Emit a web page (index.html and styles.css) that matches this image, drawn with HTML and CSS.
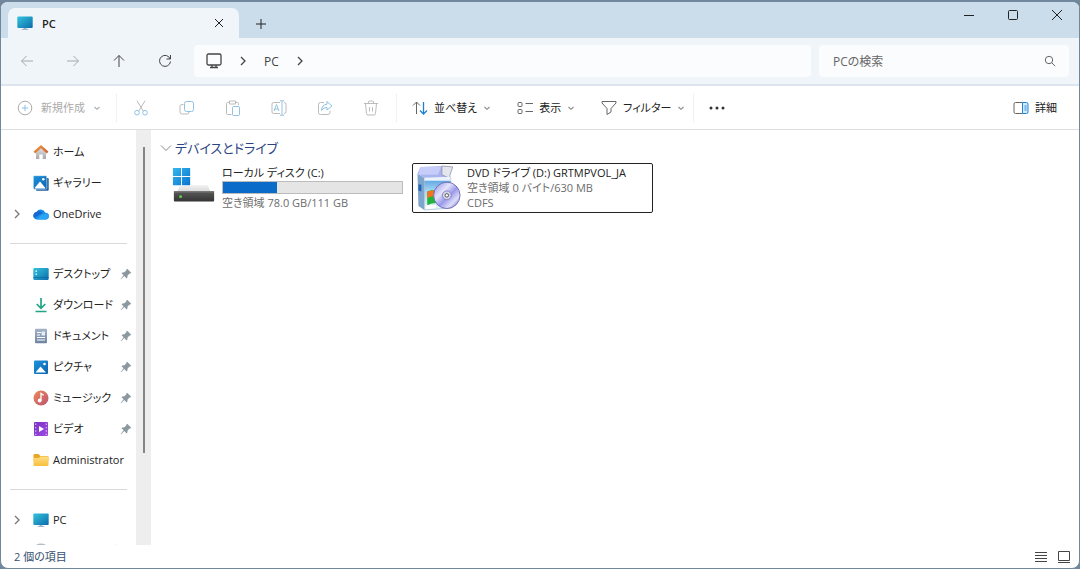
FILE: index.html
```html
<!DOCTYPE html>
<html lang="ja">
<head>
<meta charset="utf-8">
<meta name="viewport" content="width=device-width, initial-scale=1">
<title>PC</title>
<link rel="stylesheet" href="styles.css">
</head>
<body>
<svg class="defs" aria-hidden="true">
  <defs>
    <linearGradient id="g-screen" x1="0" y1="0" x2="1" y2="1"><stop offset="0" stop-color="#35c4dc"/><stop offset="1" stop-color="#0b6cad"/></linearGradient>
    <linearGradient id="g-roof" x1="0" y1="0" x2="1" y2="1"><stop offset="0" stop-color="#f0a040"/><stop offset="1" stop-color="#cf5a35"/></linearGradient>
    <linearGradient id="g-house" x1="0" y1="0" x2="0" y2="1"><stop offset="0" stop-color="#e4e4e4"/><stop offset="1" stop-color="#a8a8a8"/></linearGradient>
    <linearGradient id="g-pic" x1="0" y1="0" x2="1" y2="1"><stop offset="0" stop-color="#1d93dc"/><stop offset="1" stop-color="#0a63b0"/></linearGradient>
    <linearGradient id="g-doc" x1="0" y1="0" x2="0" y2="1"><stop offset="0" stop-color="#a3b4c8"/><stop offset="1" stop-color="#6d83a0"/></linearGradient>
    <linearGradient id="g-music" x1="0" y1="0" x2="1" y2="1"><stop offset="0" stop-color="#ee8b5a"/><stop offset="1" stop-color="#b9546e"/></linearGradient>
    <linearGradient id="g-video" x1="0" y1="0" x2="1" y2="1"><stop offset="0" stop-color="#7a32c4"/><stop offset="1" stop-color="#a04be0"/></linearGradient>
    <linearGradient id="g-folder" x1="0" y1="0" x2="0" y2="1"><stop offset="0" stop-color="#ffdf82"/><stop offset="1" stop-color="#f7be3c"/></linearGradient>
    <linearGradient id="g-win" x1="0" y1="0" x2="1" y2="1"><stop offset="0" stop-color="#35b8ee"/><stop offset="1" stop-color="#0a73d0"/></linearGradient>
    <linearGradient id="g-drive" x1="0" y1="0" x2="0" y2="1"><stop offset="0" stop-color="#5a5a5a"/><stop offset="1" stop-color="#343434"/></linearGradient>
    <linearGradient id="g-lid" x1="0" y1="0" x2="0" y2="1"><stop offset="0" stop-color="#f0f0f0"/><stop offset="1" stop-color="#cfcfcf"/></linearGradient>
    <linearGradient id="g-box" x1="0" y1="0" x2="0" y2="1"><stop offset="0" stop-color="#4f9be0"/><stop offset=".4" stop-color="#a6d6f2"/><stop offset="1" stop-color="#eef7fb"/></linearGradient>
    <linearGradient id="g-disc" x1="0" y1="0" x2="1" y2="1"><stop offset="0" stop-color="#8a88e2"/><stop offset=".35" stop-color="#e4e4fc"/><stop offset=".55" stop-color="#9a99ea"/><stop offset=".75" stop-color="#ddddfa"/><stop offset="1" stop-color="#5a58c0"/></linearGradient>
    <symbol id="i-pc" viewBox="0 0 16 16"><path d="M6.500 12h3v2.500h-3z" fill="#9cb8c8"/><path d="M4.800 14h6.400v1H4.800z" fill="#a9bac4"/><rect x=".3" y="1.500" width="15.400" height="11.500" rx="1" fill="url(#g-screen)"/></symbol>
    <symbol id="i-pin" viewBox="0 0 12 12"><path d="M7.200.8 11.200 4.800 10 5.800 9.500 5.600 7.600 7.600 7.400 9.600 6.600 10.400 4.300 8 1 11.300.6 11l3-3.700L1.500 5.200l.9-.8 2-.1 2-2L6.200 1.800z" fill="#8c989f"/></symbol>
    <symbol id="i-down" viewBox="0 0 8 8"><path d="m1.500 3 2.500 2.300L6.500 3" fill="none" stroke="currentColor" stroke-width="1.100"/></symbol>
    <symbol id="i-right" viewBox="0 0 8 10"><path d="m2 1 4 4-4 4" fill="none" stroke="currentColor" stroke-width="1.300"/></symbol>
  </defs>
</svg>
<div class="window">
  <header class="titlebar">
    <div class="tab">
      <svg class="icon"><use href="#i-pc"/></svg>
      <span class="tab-title">PC</span>
      <button class="plain" aria-label="タブを閉じる"><svg class="line" width="10" height="10" viewBox="0 0 10 10"><path d="m1 1 8 8M9 1 1 9"/></svg></button>
    </div>
    <button class="plain new-tab" aria-label="新しいタブ"><svg class="line" width="10" height="10" viewBox="0 0 10 10"><path d="M5 0v10M0 5h10"/></svg></button>
    <div class="caption">
      <button class="plain" aria-label="最小化"><svg class="line" width="12" height="12" viewBox="0 0 12 12"><path d="M1 6.500h10"/></svg></button>
      <button class="plain" aria-label="最大化"><svg class="line" width="12" height="12" viewBox="0 0 12 12"><rect x="1.500" y="1.500" width="9" height="9" rx="1"/></svg></button>
      <button class="plain" aria-label="閉じる"><svg class="line" width="12" height="12" viewBox="0 0 12 12"><path d="m1 1 10 10M11 1 1 11"/></svg></button>
    </div>
  </header>

  <nav class="navbar" aria-label="移動">
    <div class="history">
      <button class="plain" disabled aria-label="戻る"><svg class="line" width="14" height="14" viewBox="0 0 14 14"><path d="M13 7H1.500M6.500 2l-5 5 5 5"/></svg></button>
      <button class="plain" disabled aria-label="進む"><svg class="line" width="14" height="14" viewBox="0 0 14 14"><path d="M1 7h11.500M7.500 2l5 5-5 5"/></svg></button>
      <button class="plain" aria-label="上へ"><svg class="line" width="14" height="14" viewBox="0 0 14 14"><path d="M7 13V1.500M2 6.500l5-5 5 5"/></svg></button>
      <button class="plain" aria-label="最新の情報に更新"><svg class="line" width="14" height="14" viewBox="0 0 14 14"><path d="M12.200 5A5.500 5.500 0 1 0 12.500 7.500M12.500 1v4h-4"/></svg></button>
    </div>
    <div class="address">
      <svg class="line monitor" width="16" height="16" viewBox="0 0 16 16"><rect x="1" y="1" width="14" height="11" rx="1.500"/><path d="M6 12v2.500M10 12v2.500M4 14.500h8"/></svg>
      <svg class="crumb-arrow"><use href="#i-right"/></svg>
      <button class="plain crumb">PC</button>
      <svg class="crumb-arrow"><use href="#i-right"/></svg>
    </div>
    <div class="search">
      <input type="search" aria-label="PCの検索" placeholder="PCの検索">
      <svg class="line" width="12" height="12" viewBox="0 0 12 12"><circle cx="5" cy="5" r="3.700"/><path d="m7.700 7.700 3.500 3.500"/></svg>
    </div>
  </nav>

  <div class="toolbar" role="toolbar" aria-label="コマンド">
    <button class="tool new" disabled><svg class="line" width="16" height="16" viewBox="0 0 16 16"><circle cx="8" cy="8" r="6.800"/><path stroke="#8ec3e6" d="M8 4.800v6.400M4.800 8h6.400"/></svg><span>新規作成</span><svg class="chev"><use href="#i-down"/></svg></button>
    <div class="edit-tools">
      <button class="plain" disabled aria-label="切り取り"><svg class="line" width="16" height="16" viewBox="0 0 16 16"><path d="m4 .8 6.300 10.300M12 .8 5.700 11.100"/><g stroke="#8ec3e6"><circle cx="4" cy="12.700" r="2.300"/><circle cx="12" cy="12.700" r="2.300"/></g></svg></button>
      <button class="plain" disabled aria-label="コピー"><svg class="line" width="16" height="16" viewBox="0 0 16 16"><path d="M4.500 4.500H3a2 2 0 0 0-2 2V12a2 2 0 0 0 2 2h5a2 2 0 0 0 2-2"/><rect x="5.500" y="1.500" width="9" height="10" rx="2" stroke="#8ec3e6"/></svg></button>
      <button class="plain" disabled aria-label="貼り付け"><svg class="line" width="16" height="16" viewBox="0 0 16 16"><path d="M6.500 14.500h-4a1 1 0 0 1-1-1v-10a1 1 0 0 1 1-1h2m6 0h2a1 1 0 0 1 1 1v1.500M4.500 1h6v3h-6z"/><rect x="7.500" y="6.500" width="7" height="9" rx="1" stroke="#8ec3e6"/></svg></button>
      <button class="plain" disabled aria-label="名前の変更"><svg class="line" width="16" height="16" viewBox="0 0 16 16"><path d="M9 2.500H2.500a1.500 1.500 0 0 0-1.500 1.500v8a1.500 1.500 0 0 0 1.500 1.500H9M13 2.500a2 2 0 0 1 2 2v7a2 2 0 0 1-2 2"/><path stroke="#8ec3e6" d="M9 .8h4M9 15.200h4M11 .8v14.400M3 11l2.500-6.500L8 11M4 9h3"/></svg></button>
      <button class="plain" disabled aria-label="共有"><svg class="line" width="16" height="16" viewBox="0 0 16 16"><path d="M7 2.500H3.500a2 2 0 0 0-2 2v8a2 2 0 0 0 2 2H11a2 2 0 0 0 2-2V11"/><path stroke="#8ec3e6" d="M10 1.500 15 6l-5 4V7.500Q6.500 7.200 4.500 10.500 4.800 4.700 10 4.200z"/></svg></button>
      <button class="plain" disabled aria-label="削除"><svg class="line" width="16" height="16" viewBox="0 0 16 16"><path d="M1 3.500h14M5.500 3.500V2a1 1 0 0 1 1-1h3a1 1 0 0 1 1 1v1.500M2.500 3.500l1 10a1.500 1.500 0 0 0 1.500 1.500h6a1.500 1.500 0 0 0 1.500-1.500l1-10M6.500 7v4.500M9.500 7v4.500"/></svg></button>
    </div>
    <div class="view-tools">
      <button class="tool"><svg class="line" width="16" height="16" viewBox="0 0 16 16"><path d="M4.500 14V2M1 5.500 4.500 2 8 5.500"/><path stroke="#1f7fd0" stroke-width="1.300" d="M11.500 2v12M8 10.500l3.500 3.500 3.500-3.500"/></svg><span>並べ替え</span><svg class="chev"><use href="#i-down"/></svg></button>
      <button class="tool"><svg class="line" width="16" height="16" viewBox="0 0 16 16"><rect x="1" y="2.500" width="4" height="4" rx="1"/><rect x="1" y="9.500" width="4" height="4" rx="1"/><path d="M8.500 3.500H16M8.500 11.500H16"/></svg><span>表示</span><svg class="chev"><use href="#i-down"/></svg></button>
      <button class="tool"><svg class="line" width="16" height="16" viewBox="0 0 16 16"><path d="M1 1.500h14v1.500L10 8.500V12l-4 2.500v-6L1 3z"/></svg><span>フィルター</span><svg class="chev"><use href="#i-down"/></svg></button>
    </div>
    <button class="plain more" aria-label="もっと見る"><svg width="18" height="4" viewBox="0 0 18 4" fill="#333"><circle cx="3" cy="2" r="1.500"/><circle cx="9" cy="2" r="1.500"/><circle cx="15" cy="2" r="1.500"/></svg></button>
    <button class="tool details"><svg class="line" width="16" height="16" viewBox="0 0 16 16"><path d="M9.500 13.500H2.500a1.500 1.500 0 0 1-1.500-1.500V4a1.500 1.500 0 0 1 1.500-1.500h7"/><path stroke="#1f86d6" fill="#d5eafa" d="M9.500 2.500h4A1.500 1.500 0 0 1 15 4v8a1.500 1.500 0 0 1-1.500 1.500h-4zM11.500 6h2M11.500 8h2M11.500 10h2"/></svg><span>詳細</span></button>
  </div>

  <div class="body">
    <aside class="sidebar">
      <ul class="tree">
        <li><a class="item" href="#"><span></span><svg class="icon" viewBox="0 0 16 16"><path d="M3 7.500 8 3l5 4.500V15H9.700v-4.500H6.300V15H3z" fill="url(#g-house)"/><path d="M8 1 .6 7.600l1.500 1.800L8 4.200l5.900 5.200 1.500-1.800z" fill="url(#g-roof)"/></svg><span>ホーム</span></a></li>
        <li><a class="item" href="#"><span></span><svg class="icon" viewBox="0 0 16 16"><rect x="3" y="3" width="12.700" height="12.700" rx="1" fill="#1b5f9c"/><rect x=".3" y=".7" width="13.500" height="13.500" rx="1" fill="url(#g-pic)" stroke="#fff" stroke-width=".5"/><path d="m2 12.500 5-6 5 6v1H2z" fill="#fff"/><circle cx="10.300" cy="4.300" r="1.200" fill="#fff"/></svg><span>ギャラリー</span></a></li>
        <li><a class="item" href="#"><svg class="expand"><use href="#i-right"/></svg><svg class="icon" viewBox="0 0 16 16"><path d="M4 13.500A3.800 3.800 0 0 1 3.400 6 5 5 0 0 1 12.300 6.700 3.400 3.400 0 0 1 12.600 13.500z" fill="#178de8"/><path d="M3.400 6A3.800 3.800 0 0 0 1.200 12L9.800 6.700 7.500 5.500A4 4 0 0 0 3.400 6z" fill="#1767d2"/><path d="M4 13.500h8.600a3.400 3.400 0 0 0 2.400-5.800Q9 6 4 13.500z" fill="#2ba4f2"/></svg><span>OneDrive</span></a></li>
        <li class="divider" role="separator"></li>
        <li><a class="item" href="#"><span></span><svg class="icon" viewBox="0 0 16 16"><rect x=".3" y="2" width="15.400" height="12" rx="1.200" fill="url(#g-screen)"/><path d="M2.500 4.500H4V6H2.500zM2.500 7.500H4V9H2.500z" fill="#d9f6fb"/><path d="M.5 11.500h15" stroke="#0b5f95" stroke-width=".6"/></svg><span>デスクトップ</span><svg class="pin"><use href="#i-pin"/></svg></a></li>
        <li><a class="item" href="#"><span></span><svg class="icon" viewBox="0 0 16 16" fill="none" stroke="#22a584" stroke-width="1.700"><path d="M8 1v10M3.700 7 8 11.300 12.300 7M2.500 14.500h11"/></svg><span>ダウンロード</span><svg class="pin"><use href="#i-pin"/></svg></a></li>
        <li><a class="item" href="#"><span></span><svg class="icon" viewBox="0 0 16 16"><rect x="2" y=".8" width="12" height="14.400" rx="1" fill="url(#g-doc)"/><path d="M4 4.500h4M4 7h3M4 9.500h8M4 12h8" stroke="#fff"/><path d="M8.500 3.500H12v4H8.500z" fill="#e8eef6"/></svg><span>ドキュメント</span><svg class="pin"><use href="#i-pin"/></svg></a></li>
        <li><a class="item" href="#"><span></span><svg class="icon" viewBox="0 0 16 16"><rect x="1" y="1.500" width="14" height="13.500" rx="1" fill="url(#g-pic)"/><path d="m2.500 13.500 5-6 5.500 6z" fill="#fff"/><circle cx="11.500" cy="5" r="1.300" fill="#fff"/></svg><span>ピクチャ</span><svg class="pin"><use href="#i-pin"/></svg></a></li>
        <li><a class="item" href="#"><span></span><svg class="icon" viewBox="0 0 16 16"><circle cx="8" cy="8" r="7.500" fill="url(#g-music)"/><circle cx="6.700" cy="10.500" r="1.900" fill="#fff"/><path d="M8 10.500V3.500l2.700 1.700" fill="none" stroke="#fff" stroke-width="1.300"/></svg><span>ミュージック</span><svg class="pin"><use href="#i-pin"/></svg></a></li>
        <li><a class="item" href="#"><span></span><svg class="icon" viewBox="0 0 16 16"><rect x="1" y="1" width="14" height="14" rx="1" fill="url(#g-video)"/><path d="M2.700 2.500v12M13.300 2.500v12" stroke="#d8b5f5" stroke-width="1.200" stroke-dasharray="1.400 2"/><path d="M6 5v6l5-3z" fill="#fff"/></svg><span>ビデオ</span><svg class="pin"><use href="#i-pin"/></svg></a></li>
        <li><a class="item" href="#"><span></span><svg class="icon" viewBox="0 0 16 16"><path d="M.5 3a1 1 0 0 1 1-1h4L7.500 4h7a1 1 0 0 1 1 1v4H.5z" fill="#e9a825"/><path d="M.5 6h5.300l1.700-1.500h7a1 1 0 0 1 1 1V13a1 1 0 0 1-1 1h-13a1 1 0 0 1-1-1z" fill="url(#g-folder)"/></svg><span>Administrator</span></a></li>
        <li class="divider" role="separator"></li>
        <li><a class="item" href="#"><svg class="expand"><use href="#i-right"/></svg><svg class="icon"><use href="#i-pc"/></svg><span>PC</span></a></li>
        <li><a class="item" href="#"><span></span><svg class="icon" viewBox="0 0 16 16"><ellipse cx="8" cy="5" rx="6.500" ry="4.500" fill="#b4bcc4"/><path d="M1 7h14v6H1z" fill="#777"/></svg><span>DVD ドライブ</span></a></li>
      </ul>
      <div class="scrollbar"><div class="thumb"></div></div>
    </aside>

    <main class="content">
      <h1 class="group"><svg class="line" width="12" height="12" viewBox="0 0 12 12"><path d="m1 3.500 5 5 5-5"/></svg>デバイスとドライブ</h1>
      <div class="drives">
        <article class="drive">
          <svg class="drive-icon" viewBox="0 0 48 48"><path d="M10 21h28l5 10H4z" fill="url(#g-lid)"/><rect x="3" y="27" width="42" height="11" rx="1" fill="url(#g-drive)"/><path d="M3 28h42" stroke="#888"/><circle cx="10" cy="33" r="1.500" fill="#5fd34c"/><path d="M2 3h19v19H2z" fill="#fff"/><path d="M2 3h8.500v8.500H2zM11.500 3H20v8.500h-8.500zM2 12.500h8.500V21H2zM11.500 12.500H20V21h-8.500z" fill="url(#g-win)"/></svg>
          <div class="drive-text">
            <span class="name">ローカル ディスク (C:)</span>
            <div class="meter" role="meter" aria-label="使用領域" aria-valuemin="0" aria-valuemax="111" aria-valuenow="33"><div class="used" style="width:30%"></div></div>
            <span class="sub">空き領域 78.0 GB/111 GB</span>
          </div>
        </article>
        <article class="drive selected">
          <svg class="drive-icon" viewBox="3 0 44 47"><path d="m3 9 7 4v33l-6-4z" fill="#7fa5cc"/><path d="M10 13h27v31l-27 2z" fill="url(#g-box)" stroke="#8faecb" stroke-width=".6"/><path d="m3 9 3-7 24-1 7 12H10z" fill="#a9b3ee"/><path d="M6 2h21l-3 8H4z" fill="#c7cdfa"/><path d="m28 1 11 1-3 9 1 3-9-4z" fill="#e4e6ee" stroke="#8c94a8" stroke-width=".8"/><path d="m10 13 27-1v4H10z" fill="#eaf3fb"/><path d="M4 20h3v7l-3-1z" fill="#2464b4"/><path d="M13 27q6-2 12-1v13q-6-1-12 2z" fill="#22b43a"/><path d="M13 27q4-1 7-1v6q-4 0-7 2z" fill="#f5721f"/><path d="M12 41h10v3l-10 1z" fill="#fff"/><circle cx="33" cy="31" r="13.500" fill="url(#g-disc)" stroke="#6664b4" stroke-width=".9"/><circle cx="33" cy="31" r="4.500" fill="#d5d4ec" stroke="#7775b2" stroke-width=".8"/><circle cx="33" cy="31" r="1.800" fill="#fff" stroke="#555"/></svg>
          <div class="drive-text">
            <span class="name">DVD ドライブ (D:) GRTMPVOL_JA</span>
            <span class="sub">空き領域 0 バイト/630 MB</span>
            <span class="sub">CDFS</span>
          </div>
        </article>
      </div>
    </main>
  </div>

  <footer class="status">
    <span>2 個の項目</span>
    <div class="layouts">
      <button class="plain" aria-label="詳細表示"><svg class="line" width="12" height="12" viewBox="0 0 12 12"><path d="M0 1.500h12M0 4.500h12M0 7.500h12M0 10.500h12"/></svg></button>
      <button class="plain" aria-label="大きいアイコン"><svg class="line" width="12" height="12" viewBox="0 0 12 12"><path d="M.5.500h11v9H.5zM0 11.500h12"/></svg></button>
    </div>
  </footer>
</div>
</body>
</html>
```

FILE: styles.css
```css
* { box-sizing: border-box; }

body {
  margin: 0;
  background: #71879c;
  color: #222;
  font-family: "Open Sans", "Noto Sans CJK JP", sans-serif;
  font-size: 11px;
  line-height: 15px;
  font-feature-settings: "palt";
}

button, input {
  font: inherit;
  font-feature-settings: inherit;
  color: inherit;
}

.defs { position: absolute; width: 0; height: 0; }

.line {
  fill: none;
  stroke: currentColor;
  stroke-width: 1;
  flex: none;
}

.icon { width: 16px; height: 16px; flex: none; }

.plain {
  display: flex;
  align-items: center;
  justify-content: center;
  padding: 0;
  border: 0;
  background: none;
}

.window {
  display: flex;
  flex-direction: column;
  height: 100vh;
  border: 1px solid #71879c;
  border-top-width: 2px;
  border-radius: 8px;
  background: #fff;
  overflow: hidden;
}

/* Title bar */
.titlebar {
  display: flex;
  flex: none;
  height: 36px;
  background: #cbdceb;
}

.tab {
  display: flex;
  align-items: center;
  gap: 9px;
  width: 231px;
  margin: 6px 0 0 7px;
  padding: 0 15px 0 9px;
  border-radius: 7px 7px 0 0;
  background: #f0f5fa;
}

.tab-title { flex: 1; font-weight: 600; }
.new-tab { width: 44px; padding-top: 7px; }
.caption { display: flex; margin-left: auto; height: 26px; }
.caption .plain { width: 44px; }

/* Navigation */
.navbar {
  display: flex;
  align-items: center;
  flex: none;
  height: 48px;
  padding-right: 10px;
  border-bottom: 2px solid #dce5ed;
  background: #f0f5fa;
}

.history { display: flex; width: 193px; padding-left: 3px; color: #444; }
.history .plain { width: 46px; height: 32px; }
.history .plain:disabled { color: #a4a9ae; }

.address, .search {
  display: flex;
  align-items: center;
  height: 32px;
  border-radius: 4px;
  background: #fbfcfe;
}

.address { flex: 1; gap: 16px; padding-left: 12px; color: #444; }
.address .monitor { stroke-width: 1.3; }
.crumb { font-size: 12px; }
.crumb-arrow { width: 8px; height: 10px; margin: 0 1px; }

.search {
  width: 250px;
  margin-left: 8px;
  padding: 0 13px 0 14px;
  color: #666;
}

.search input {
  flex: 1;
  min-width: 0;
  padding: 0;
  border: 0;
  outline: 0;
  background: none;
  font-size: 12px;
}

.search input::placeholder { color: #666; opacity: 1; }

/* Toolbar */
.toolbar {
  display: flex;
  align-items: center;
  flex: none;
  height: 44px;
  padding: 0 22px 0 16px;
  border-bottom: 1px solid #dcdfe2;
}

.tool {
  display: flex;
  align-items: center;
  gap: 6px;
  padding: 0;
  border: 0;
  background: none;
  white-space: nowrap;
}

.tool span { color: #222; }
.tool .line { color: #666; }
.chev { width: 8px; height: 8px; color: #888; }
.new { width: 99px; gap: 8px; }
.new span, .new .line, .new .chev { color: #aaa; }

.edit-tools {
  display: flex;
  padding: 0 2px 0 1px;
  border: solid #f0f1f2;
  border-width: 0 1px;
}

.edit-tools .plain { width: 46px; height: 30px; color: #bbb; }

.view-tools {
  display: flex;
  gap: 26px;
  height: 30px;
  padding: 0 8px 0 15px;
  border-right: 1px solid #f0f1f2;
}

.more { width: 46px; }
.details { margin-left: auto; }

/* Body */
.body { display: flex; flex: 1; min-height: 0; }
.sidebar { display: flex; flex: none; width: 150px; overflow: hidden; }

.tree {
  flex: 1;
  margin: 0;
  padding: 6px 0 0;
  list-style: none;
}

.item {
  display: grid;
  grid-template-columns: 8px 24px 1fr auto;
  align-items: center;
  height: 31px;
  padding: 0 4px 0 12px;
  column-gap: 4px;
  color: inherit;
  text-decoration: none;
  white-space: nowrap;
}

.item .icon { justify-self: end; }
.expand { width: 8px; height: 10px; color: #777; }
.pin { width: 12px; height: 12px; }

.divider {
  height: 29px;
  padding: 14px 9px;
}

.divider::before {
  content: "";
  display: block;
  height: 1px;
  background: #d9d9d9;
}

.scrollbar {
  display: flex;
  justify-content: center;
  flex: none;
  width: 15px;
  padding-top: 17px;
  background: #eee;
}

.thumb { width: 2px; height: 77%; background: #858585; }

.content { flex: 1; min-width: 0; padding: 9px; }

.group {
  display: flex;
  align-items: center;
  gap: 3px;
  margin: 0;
  color: #2b4482;
  font-size: 13px;
  line-height: 18px;
  font-weight: 400;
}

.group .line { color: #888; }

.drives {
  display: flex;
  flex-wrap: wrap;
  gap: 4px;
  margin-top: 6px;
  padding-left: 7px;
}

.drive {
  display: flex;
  gap: 5px;
  width: 241px;
  height: 50px;
  padding: 1px 4px 0 3px;
  border: 1px solid transparent;
}

.selected { border-color: #222; border-radius: 2px; }
.drive-icon { width: 46px; height: 46px; flex: none; }
.drive-text { flex: 1; min-width: 0; white-space: nowrap; }
.name, .sub { display: block; }
.sub { color: #6d6d6d; }

.meter {
  height: 13px;
  margin: 1px 0;
  border: 1px solid #bcbcbc;
  background: #e5e5e5;
}

.used { height: 100%; background: #0a6cc8; }

/* Status bar */
.status {
  display: flex;
  align-items: center;
  justify-content: space-between;
  flex: none;
  height: 23px;
  padding: 0 9px 0 13px;
  color: #35506f;
}

.layouts { display: flex; gap: 11px; color: #444; }
```
